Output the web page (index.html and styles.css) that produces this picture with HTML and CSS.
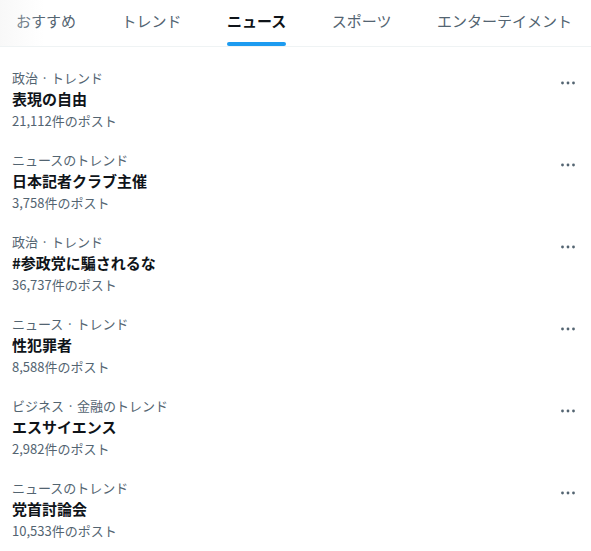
FILE: index.html
```html
<!DOCTYPE html>
<html lang="ja">
<head>
<meta charset="utf-8">
<title>ニュース</title>
<link rel="stylesheet" href="styles.css">
</head>
<body>
<nav class="tabs">
  <a class="tab">おすすめ</a>
  <a class="tab">トレンド</a>
  <a class="tab active">ニュース</a>
  <a class="tab">スポーツ</a>
  <a class="tab">エンターテイメント</a>
  <span class="fade"></span>
</nav>

<ul class="trends">
  <li class="trend">
    <div class="text">
      <div class="meta">政治 · トレンド</div>
      <div class="title">表現の自由</div>
      <div class="count">21,112件のポスト</div>
    </div>
    <button class="more" aria-label="その他"><svg viewBox="0 0 14 4" width="14" height="4"><circle cx="1.5" cy="2" r="1.4"/><circle cx="7" cy="2" r="1.4"/><circle cx="12.5" cy="2" r="1.4"/></svg></button>
  </li>
  <li class="trend">
    <div class="text">
      <div class="meta">ニュースのトレンド</div>
      <div class="title">日本記者クラブ主催</div>
      <div class="count">3,758件のポスト</div>
    </div>
    <button class="more" aria-label="その他"><svg viewBox="0 0 14 4" width="14" height="4"><circle cx="1.5" cy="2" r="1.4"/><circle cx="7" cy="2" r="1.4"/><circle cx="12.5" cy="2" r="1.4"/></svg></button>
  </li>
  <li class="trend">
    <div class="text">
      <div class="meta">政治 · トレンド</div>
      <div class="title">#参政党に騙されるな</div>
      <div class="count">36,737件のポスト</div>
    </div>
    <button class="more" aria-label="その他"><svg viewBox="0 0 14 4" width="14" height="4"><circle cx="1.5" cy="2" r="1.4"/><circle cx="7" cy="2" r="1.4"/><circle cx="12.5" cy="2" r="1.4"/></svg></button>
  </li>
  <li class="trend">
    <div class="text">
      <div class="meta">ニュース · トレンド</div>
      <div class="title">性犯罪者</div>
      <div class="count">8,588件のポスト</div>
    </div>
    <button class="more" aria-label="その他"><svg viewBox="0 0 14 4" width="14" height="4"><circle cx="1.5" cy="2" r="1.4"/><circle cx="7" cy="2" r="1.4"/><circle cx="12.5" cy="2" r="1.4"/></svg></button>
  </li>
  <li class="trend">
    <div class="text">
      <div class="meta">ビジネス · 金融のトレンド</div>
      <div class="title">エスサイエンス</div>
      <div class="count">2,982件のポスト</div>
    </div>
    <button class="more" aria-label="その他"><svg viewBox="0 0 14 4" width="14" height="4"><circle cx="1.5" cy="2" r="1.4"/><circle cx="7" cy="2" r="1.4"/><circle cx="12.5" cy="2" r="1.4"/></svg></button>
  </li>
  <li class="trend">
    <div class="text">
      <div class="meta">ニュースのトレンド</div>
      <div class="title">党首討論会</div>
      <div class="count">10,533件のポスト</div>
    </div>
    <button class="more" aria-label="その他"><svg viewBox="0 0 14 4" width="14" height="4"><circle cx="1.5" cy="2" r="1.4"/><circle cx="7" cy="2" r="1.4"/><circle cx="12.5" cy="2" r="1.4"/></svg></button>
  </li>
</ul>
</body>
</html>
```

FILE: styles.css
```css
* {
  box-sizing: border-box;
}

html, body {
  margin: 0;
  padding: 0;
  background: #ffffff;
}

body {
  font-family: "Noto Sans CJK JP", "Noto Sans", sans-serif;
  color: #0f1419;
  overflow: hidden;
}

/* Tab strip */
.tabs {
  position: relative;
  display: flex;
  height: 47px;
  padding-left: 16px;
  border-bottom: 1px solid #eff3f4;
  white-space: nowrap;
}

.tab {
  position: relative;
  display: flex;
  align-items: center;
  height: 46px;
  margin-right: 45.5px;
  padding-bottom: 6px;
  font-size: 15px;
  color: #536471;
  cursor: pointer;
}

.tab.active {
  font-weight: 700;
  color: #0f1419;
}

.tab.active::after {
  content: "";
  position: absolute;
  left: 0;
  right: 0;
  bottom: 0;
  height: 4px;
  border-radius: 2px;
  background: #1d9bf0;
}

.fade {
  position: absolute;
  left: 0;
  top: 0;
  width: 44px;
  height: 46px;
  background: linear-gradient(to right, rgba(240, 240, 240, 0.45), rgba(255, 255, 255, 0));
  pointer-events: none;
}

/* Trend list */
.trends {
  list-style: none;
  margin: 0;
  padding: 11px 0 0;
}

.trend {
  display: flex;
  justify-content: space-between;
  align-items: flex-start;
  height: 82px;
  padding: 12px 12px 0 12px;
}

.meta,
.count {
  font-size: 13px;
  line-height: 16px;
  color: #536471;
}

.title {
  margin-top: 3px;
  font-size: 15px;
  line-height: 20px;
  font-weight: 700;
  color: #0f1419;
}

.count {
  margin-top: 4px;
}

.more {
  display: flex;
  align-items: center;
  justify-content: center;
  width: 22px;
  height: 22px;
  margin: 2px 0 0 0;
  padding: 0;
  border: 0;
  background: none;
  fill: #536471;
  cursor: pointer;
}
```
